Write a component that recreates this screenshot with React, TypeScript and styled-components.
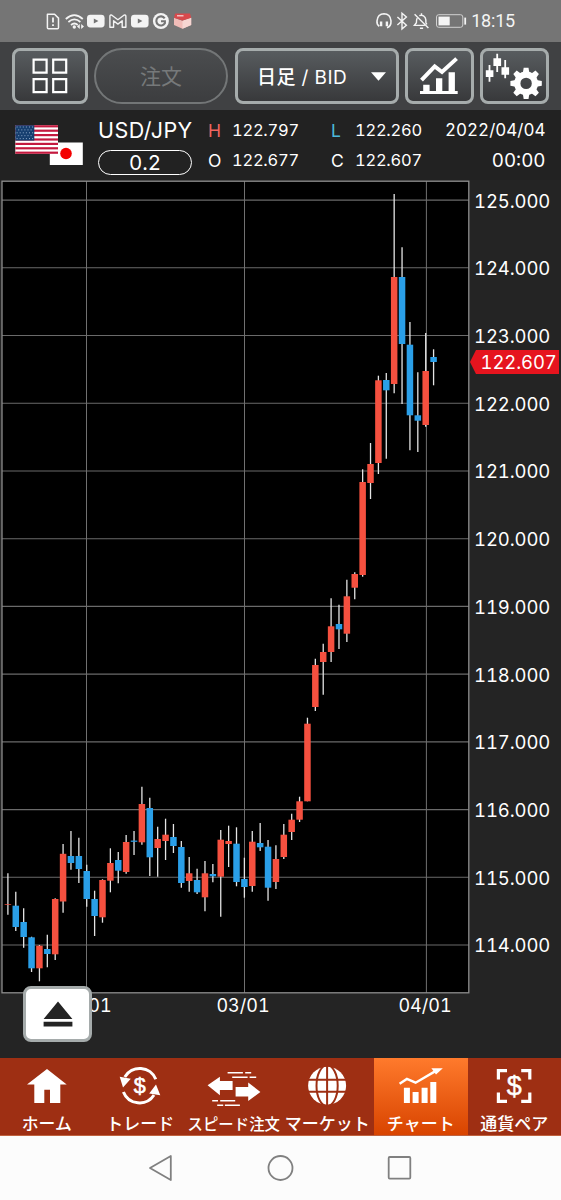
import React from 'react';
import styled, { createGlobalStyle } from 'styled-components';

const UI = `'Inter', 'Noto Sans CJK JP', sans-serif`;
const JP = `'Noto Sans CJK JP', 'Noto Sans', sans-serif`;

const GlobalStyle = createGlobalStyle`
  *, *::before, *::after { box-sizing: border-box; }
  body { margin: 0; background: #242424; }
  svg { display: block; flex: none; }
`;

const Screen = styled.div`
  width: 561px;
  height: 1200px;
  display: flex;
  flex-direction: column;
  overflow: hidden;
  background: #242424;
  color: #fff;
  font-family: ${UI};
  font-variant-numeric: tabular-nums;
`;

/* ---------- status bar ---------- */

const StatusBar = styled.header`
  height: 42px;
  flex: none;
  display: flex;
  align-items: center;
  justify-content: space-between;
  padding: 0 46px 0 42px;
  background: #757575;
`;

const StatusGroup = styled.div`
  display: flex;
  align-items: center;
`;

const Clock = styled.span`
  margin-left: 3px;
  font: 400 18px/20px Roboto, sans-serif;
  letter-spacing: -0.2px;
  color: #f4f4f4;
`;

const StatusIcon = ({ children, w = 21.7 }: { children: React.ReactNode; w?: number }) => (
  <svg width={w} height={20} viewBox={`0 0 ${w} 20`} fill="none" stroke="#f4f4f4" strokeWidth={1.5}>
    {children}
  </svg>
);

const PlayIcon = () => (
  <StatusIcon>
    <rect x="2" y="3.8" width="17.6" height="12.6" rx="3.4" fill="#f4f4f4" stroke="none" />
    <path d="M8.8 7.4v5.2l4.6-2.6z" fill="#757575" stroke="none" />
  </StatusIcon>
);

/* ---------- toolbar ---------- */

const Toolbar = styled.nav`
  height: 68px;
  flex: none;
  display: flex;
  align-items: flex-start;
  gap: 6.5px;
  padding: 6px 12px;
  background: #404143;
`;

const ToolButton = styled.button<{ $w: number; $pill?: boolean }>`
  width: ${p => p.$w}px;
  height: 56px;
  flex: none;
  display: flex;
  align-items: center;
  justify-content: center;
  padding: ${p => (p.$pill ? '2px 0 0' : '0')};
  border: ${p => (p.$pill ? '2.6px solid #737677' : '3px solid #a6acac')};
  border-radius: ${p => (p.$pill ? 28 : 8)}px;
  background: ${p =>
    p.$pill ? 'linear-gradient(#4b4d4f, #3c3d3f)' : 'linear-gradient(#585c5f, #38393b)'};
  color: ${p => (p.$pill ? '#76797a' : '#fff')};
  font: 400 21px/24px ${UI};
`;

const PeriodLabel = styled.span`
  margin-right: 24px;
  padding: 2px 0 0 10px;
  font-size: 19px;
  letter-spacing: 0.4px;
  white-space: pre;
`;

const PeriodUnit = styled.span`
  font-family: ${JP};
  font-weight: 500;
`;

/* ---------- quote header ---------- */

const Quote = styled.section`
  height: 70px;
  flex: none;
  display: grid;
  grid-template-columns: 83px 110px 24px 99px 24px 92px 98.5px;
  grid-template-rows: 30px 30px;
  align-items: center;
  padding: 5px 0 5px 15px;
  background: #222;
`;

const Flags = styled.div`
  grid-row: 1 / 3;
`;

const PairName = styled.div`
  font-size: 21.5px;
  line-height: 26px;
  letter-spacing: 0.45px;
`;

const Spread = styled.div`
  width: 94px;
  height: 25px;
  margin-top: 4px;
  border: 1.6px solid #fff;
  border-radius: 13px;
  text-align: center;
  font-size: 20.5px;
  line-height: 24px;
`;

const Mark = styled.span<{ $c?: string }>`
  font-size: 17.5px;
  color: ${p => p.$c ?? '#fff'};
`;

const Value = styled.span`
  font-size: 16.5px;
  letter-spacing: -0.25px;
`;

const Stamp = styled.span<{ $size: number }>`
  font-size: ${p => p.$size}px;
  justify-self: end;
  white-space: nowrap;
`;

/* ---------- chart ---------- */

const ChartArea = styled.main`
  position: relative;
  height: 878px;
  flex: none;
  display: grid;
  grid-template-columns: 470px 91px;
  grid-template-rows: 814px 64px;
`;

const PriceAxis = styled.div`
  display: flex;
  flex-direction: column;
  gap: 47.72px;
  padding: 10.5px 0 0 4px;
  font-size: 18.5px;
  line-height: 20px;
  letter-spacing: -0.1px;
`;

const DateAxis = styled.div`
  display: flex;
  font-size: 18px;
  line-height: 23px;
`;

const DateTick = styled.span<{ $gap: number }>`
  width: 60px;
  margin-left: ${p => p.$gap}px;
  text-align: center;
`;

const PriceTag = styled.div`
  position: absolute;
  left: 470px;
  top: 170px;
  width: 89px;
  height: 24px;
  padding-left: 10.5px;
  background: #e6141e;
  clip-path: polygon(0 50%, 6px 0, 100% 0, 100% 100%, 6px 100%);
  font-size: 18.5px;
  line-height: 25px;
  letter-spacing: -0.1px;
`;

const EjectButton = styled.button`
  position: absolute;
  left: 23px;
  top: 806px;
  width: 69px;
  height: 56px;
  display: flex;
  align-items: center;
  justify-content: center;
  padding: 0;
  border: 3px solid #a5abab;
  border-radius: 8px;
  background: #fff;
`;

// Each candle: wick top, body top, body bottom, wick bottom, rising
type Candle = [number, number, number, number, 0 | 1];
const candles: Candle[] = [
  [873.3, 904.3, 905, 914.7, 1], [891.7, 905.7, 927, 931, 0], [908.3, 922, 937, 947.7, 0],
  [936.7, 937.3, 968.3, 972, 0], [945, 945.7, 968.3, 981.3, 1], [934.7, 949, 954, 967.3, 0],
  [898.3, 899, 954.3, 960, 1], [844, 853.8, 901.5, 912.7, 1], [831, 856, 863, 869.7, 0],
  [837.7, 856, 869, 883, 0], [864.7, 871, 899, 906.7, 0], [890.7, 899, 916, 936, 0],
  [879.3, 880, 917.3, 922.7, 1], [848.3, 863, 880.7, 892.3, 1], [852, 860, 870.7, 883.3, 0],
  [835, 842, 872, 873.7, 1], [831, 840.6, 841.8, 855, 0], [786.7, 804, 842.3, 844.7, 1],
  [797.7, 808, 857.3, 876, 0], [826.7, 839, 848, 876.7, 1], [818.7, 834.7, 841, 860, 1],
  [824, 837, 846, 853, 0], [841, 847, 883, 887.7, 0], [857, 873.3, 881, 891.7, 1],
  [868.7, 880, 892.3, 894, 0], [861, 873.3, 897.3, 911.3, 1], [864, 874, 876.3, 882.3, 0],
  [830, 839.7, 876.7, 916.7, 1], [825.7, 841, 844, 867, 1], [827.3, 843.7, 882, 886.3, 0],
  [857.7, 879, 887, 897.7, 0], [831, 841.7, 886, 891.7, 1], [823, 843, 847.3, 851, 0],
  [840, 846.7, 887.7, 900.7, 0], [845.3, 859, 882, 889, 1], [824, 834.7, 857, 859, 1],
  [813.7, 819.7, 832, 840, 1], [796.7, 801.3, 819.7, 822, 1], [717.7, 723.7, 801.3, 801.3, 1],
  [658.7, 665, 707, 711, 1], [643.7, 652, 662, 694.7, 1], [598.3, 626.3, 652, 662, 1],
  [604.7, 624, 629.3, 649, 0], [579.7, 596.3, 633.7, 642, 1], [572.3, 574, 587.7, 599.3, 1],
  [469.3, 482, 575, 576.7, 1], [443, 464, 483, 499, 1], [375.7, 380.3, 463, 474, 1],
  [373, 380, 390.3, 458.7, 0], [194, 277, 384, 393.3, 1], [247.3, 277, 344, 404, 0],
  [322, 344.7, 415.3, 450.3, 0], [372.3, 415.3, 420.7, 452, 0], [333, 371, 425, 426.7, 1],
  [349.3, 357, 362, 385.3, 0],
];
const prices = Array.from({ length: 12 }, (_, i) => `${125 - i}.000`);

const Plot = () => (
  <svg width="470" height="814" viewBox="0 180 470 814">
    <rect x="2" y="181.2" width="466.8" height="811.6" fill="#000" />
    {prices.map((p, i) => (
      <path key={p} d={`M2 ${200.1 + i * 67.72}H469`} stroke="#6a6a6a" strokeWidth="1.1" />
    ))}
    {[86.5, 244.5, 426.4].map(x => (
      <path key={x} d={`M${x} 181V993`} stroke="#707070" strokeWidth="1" />
    ))}
    <rect x="2" y="181.2" width="466.8" height="811.6" fill="none" stroke="#8d8d8d" strokeWidth="1.3" />
    {candles.map(([hi, top, bot, lo, up], i) => {
      const x = 7.9 + i * 7.883;
      return (
        <g key={i}>
          <path d={`M${x} ${hi}V${lo}`} stroke="#e4e4e4" strokeWidth="1.3" />
          <rect x={x - 3.25} y={top} width="6.5" height={bot - top} fill={up ? '#f5503f' : '#2a9fe8'} />
        </g>
      );
    })}
  </svg>
);

/* ---------- bottom tabs ---------- */

const TabBar = styled.nav`
  height: 78px;
  flex: none;
  display: grid;
  grid-template-columns: repeat(6, 1fr);
  background: #9e2f13;
  border-bottom: 1px solid #c0623f;
`;

const Tab = styled.div<{ $active?: boolean }>`
  display: flex;
  flex-direction: column;
  align-items: center;
  padding-top: 7px;
  background: ${p => (p.$active ? 'linear-gradient(#ff7a2c, #d84400)' : 'none')};
`;

const TabLabel = styled.span<{ $size: number }>`
  height: 24px;
  margin-top: 4px;
  font: 500 ${p => p.$size}px/24px ${JP};
  white-space: nowrap;
`;

const TabIcon = ({ children }: { children: React.ReactNode }) => (
  <svg width="60" height="42" viewBox="0 0 60 42" fill="#fff">{children}</svg>
);

const Dollar = styled.text`
  font-family: 'Liberation Sans', sans-serif;
  text-anchor: middle;
  stroke: #fff;
`;

const HomeIcon = () => (
  <TabIcon>
    <path d="M30 4L10 19.4h7.3V38h10V24.7H33V38h10.3V19.4h6.4z" />
  </TabIcon>
);

const TradeIcon = () => (
  <TabIcon>
    <path d="M14.8 12A17.3 17.3 0 0 1 45.8 14.3M13.4 27A17.3 17.3 0 0 0 44 30" fill="none" stroke="#fff" strokeWidth="3" />
    <path d="M9.7 11.7L20.8 13.7L13 22.4zM46 19.6L50.3 30.2L39.2 28.6z" />
    <Dollar x="29.8" y="27.7" fontSize="21.5" strokeWidth=".6">$</Dollar>
  </TabIcon>
);

const SpeedIcon = () => (
  <TabIcon>
    <path d="M3.6 20.2L15.9 11.8V16H28.6V25H15.9V30.3zM56.4 27L44.2 17.6V22H31.6V31.6H44.2V36z" />
    <path
      d="M23.6 7.7h15.3M41.2 7.7h6M28.2 12.2h15.4M45.6 12.2h6.6M8.2 35.7H14M16.2 35.7h15M13.2 40.2h6M20.9 40.2h15"
      stroke="#fff" strokeWidth="1.5"
    />
  </TabIcon>
);

const GlobeIcon = () => (
  <TabIcon>
    <circle cx="30.1" cy="20.7" r="19" />
    <g fill="none" stroke="#9e2f13" strokeWidth="2">
      <path d="M30.1 1V40.4M10 14.7H50M10 26.8H50" />
      <ellipse cx="30.1" cy="20.7" rx="10.6" ry="20.4" />
    </g>
  </TabIcon>
);

const ChartTabIcon = () => (
  <TabIcon>
    <path d="M12.9 22.7h6V38h-6zM21.6 27h6v11h-6zM30.6 22.7h6V38h-6zM39.3 17h6v21h-6z" />
    <path d="M8.6 18.7L15.9 13.9L24.6 17.7L44 6.4" fill="none" stroke="#fff" strokeWidth="2.4" />
    <path d="M40.4 3.2H51.8L45 9.4z" />
  </TabIcon>
);

const PairIcon = () => (
  <TabIcon>
    <path
      d="M14.4 14.4V5.6H23M37.2 5.6h8.6v8.8M45.8 27.6v8.8h-8.6M23 36.4h-8.6v-8.8"
      fill="none" stroke="#fff" strokeWidth="3.2"
    />
    <Dollar x="30.3" y="29.5" fontSize="27" strokeWidth=".4">$</Dollar>
  </TabIcon>
);

const tabs = [
  { label: 'ホーム', size: 16.8, Icon: HomeIcon },
  { label: 'トレード', size: 17, Icon: TradeIcon },
  { label: 'スピード注文', size: 15.4, Icon: SpeedIcon },
  { label: 'マーケット', size: 17, Icon: GlobeIcon },
  { label: 'チャート', size: 17, Icon: ChartTabIcon, active: true },
  { label: '通貨ペア', size: 17, Icon: PairIcon },
];

const SystemNav = styled.footer`
  flex: 1;
  display: flex;
  justify-content: center;
  padding: 18px 2px 0 0;
  background: #fcfcfc;
`;

const teeth = Array.from({ length: 8 }, (_, i) => i * 45);

const App = () => (
  <Screen>
    <GlobalStyle />
    <StatusBar>
      <StatusGroup>
        <StatusIcon>
          <path d="M5.4 3.2h7.2l3.9 3.9v9.7q0 1-1 1H6.4q-1 0-1-1z" strokeLinejoin="round" />
          <path d="M11 6.6v5M11 13.3v1.7" strokeWidth="1.8" />
        </StatusIcon>
        <StatusIcon>
          <path d="M1.8 8q8.5-7.6 17 0M4.4 11q6-5.2 12 0M7 14q3.4-3 6.8 0" strokeWidth="1.7" />
          <circle cx="10.3" cy="16" r="1.7" fill="#f4f4f4" stroke="none" />
          <path d="M15.8 13v5l-2.8-2.5zM17.2 13v5l2.8-2.5z" fill="#f4f4f4" stroke="none" />
        </StatusIcon>
        <PlayIcon />
        <StatusIcon>
          <path d="M2.9 5.4q0-1.8 2-1.2l6 4.5 6-4.5q2-.6 2 1.2v10.9h-3.7V9.8l-4.3 3.3-4.3-3.3v6.5H2.9z" strokeWidth="1.4" strokeLinejoin="round" />
        </StatusIcon>
        <PlayIcon />
        <StatusIcon>
          <circle cx="10.9" cy="10" r="8" fill="#f4f4f4" stroke="none" />
          <path d="M14.7 7.3a4.6 4.6 0 1 0 .2 5V10.3H11" stroke="#757575" strokeWidth="2.1" />
        </StatusIcon>
        <StatusIcon>
          <path d="M2 6.8L10.5 9.8L19.2 6.8V14L10.5 17.8L2 14z" fill="#f1bcb8" stroke="none" />
          <path d="M10.5 9.8L19.2 6.8V14L10.5 17.8z" fill="#f6d6d2" stroke="none" />
          <path d="M3.2 2.6H18L19.2 6.8L10.5 9.4L2 6.8z" fill="#d9494c" stroke="none" />
          <path d="M5 4.8h6.5" stroke="#f7dede" strokeWidth="1.2" />
        </StatusIcon>
      </StatusGroup>
      <StatusGroup>
        <StatusIcon w={18}>
          <path d="M4.3 15.2Q1.6 13.5 2 9.8Q2.8 2.9 9 2.8Q15.2 2.9 16 9.8Q16.3 15.4 12 16.8" strokeWidth="1.6" />
          <path d="M6.1 10.4v4.8M11.9 10.4v4.8" strokeWidth="2.4" />
        </StatusIcon>
        <StatusIcon w={18}>
          <path d="M4.4 6l9 8.2-4.4 3.7V2.2l4.4 3.7-9 8.1" strokeWidth="1.4" />
        </StatusIcon>
        <StatusIcon w={20}>
          <path d="M6.2 7.2q-.8 1.2-.8 4.6l-2 2.6h10.4M8.3 4.7Q12 3 14.2 6.6q.8 1.6.7 5.2l1 1.5M8.9 17.2h3.2M10.5 2.2v1.6M3.6 3.3l13.8 13.8" strokeWidth="1.4" />
        </StatusIcon>
        <StatusIcon w={37}>
          <rect x="5.5" y="3.7" width="26.3" height="12.6" rx="2.3" strokeWidth="1" stroke="#d0d0d0" />
          <rect x="7.5" y="5.6" width="11.2" height="8.8" fill="#f4f4f4" stroke="none" />
          <path d="M34.2 6.6v7" strokeWidth="1.8" />
        </StatusIcon>
        <Clock>18:15</Clock>
      </StatusGroup>
    </StatusBar>

    <Toolbar>
      <ToolButton $w={75.5}>
        <svg width="36" height="36" viewBox="0 0 36 36" fill="none" stroke="#fff" strokeWidth="2.2">
          <path d="M1.6 1.6h13v13h-13zM21.2 1.6h13v13h-13zM1.6 21.2h13v13h-13zM21.2 21.2h13v13h-13z" />
        </svg>
      </ToolButton>
      <ToolButton $w={134} $pill>注文</ToolButton>
      <ToolButton $w={164}>
        <PeriodLabel><PeriodUnit>日足</PeriodUnit> / BID</PeriodLabel>
        <svg width="15" height="9" viewBox="0 0 15 9"><path d="M0 .3h15L7.5 8.7z" fill="#fff" /></svg>
      </ToolButton>
      <ToolButton $w={68.5}>
        <svg width="40" height="38" viewBox="419 58 40 38" fill="#fff">
          <path d="M420 92h37.7v3H420zM423.2 85.7h6.4v7h-6.4zM436 79.3h6.3v13.4H436zM448.6 73.3h6.3v19.4h-6.3z" />
          <path d="M421.5 81.2L434.7 67.4L442 73L456.6 59.6" fill="none" stroke="#fff" strokeWidth="4" />
        </svg>
      </ToolButton>
      <ToolButton $w={68.5}>
        <svg width="60" height="50" viewBox="484.5 51 60 50" fill="#fff">
          <path d="M490 65v16.7M497.7 53.7V72M505.7 60v18.3" stroke="#fff" strokeWidth="1.8" />
          <path d="M486.3 70.2h7.6V77h-7.6zM493.9 58.3h7.7V66h-7.7zM502 67.3h7.6v7.4H502z" />
          <circle cx="526.6" cy="83.4" r="8.8" fill="none" stroke="#fff" strokeWidth="6.2" />
          {teeth.map(a => (
            <path key={a} d="M523.3 73l.9-5.3h4.8l.9 5.3z" transform={`rotate(${a} 526.6 83.4)`} />
          ))}
        </svg>
      </ToolButton>
    </Toolbar>

    <Quote>
      <Flags>
        <svg width="69" height="42" viewBox="0 0 69 42">
          <rect x="34.8" y="18.5" width="33" height="22.5" fill="#fff" />
          <circle cx="51" cy="29.5" r="5.8" fill="#f30000" />
          <rect x=".3" y="1.2" width="42.7" height="28.6" fill="#fff" />
          {[0, 1, 2, 3, 4, 5, 6].map(i => (
            <rect key={i} x=".3" y={1.2 + i * 4.4} width="42.7" height="2.2" fill="#c4193f" />
          ))}
          <rect x=".3" y="1.2" width="19" height="15.4" fill="#173f70" />
          {[0, 1, 2, 3, 4].map(i => (
            <path key={i} d={`M1.6 ${3 + i * 2.9}H18.6`} stroke="#8fa9c8" strokeWidth="1" strokeDasharray="1 2.1" strokeDashoffset={i % 2 ? 1.5 : 0} />
          ))}
        </svg>
      </Flags>
      <PairName>USD/JPY</PairName>
      <Mark $c="#ee6560">H</Mark>
      <Value>122.797</Value>
      <Mark $c="#4cb8dc">L</Mark>
      <Value>122.260</Value>
      <Stamp $size={17}>2022/04/04</Stamp>
      <Spread>0.2</Spread>
      <Mark>O</Mark>
      <Value>122.677</Value>
      <Mark>C</Mark>
      <Value>122.607</Value>
      <Stamp $size={18.8}>00:00</Stamp>
    </Quote>

    <ChartArea>
      <Plot />
      <PriceAxis>
        {prices.map(p => <span key={p}>{p}</span>)}
      </PriceAxis>
      <DateAxis>
        <DateTick $gap={55}>02/01</DateTick>
        <DateTick $gap={98}>03/01</DateTick>
        <DateTick $gap={122}>04/01</DateTick>
      </DateAxis>
      <PriceTag>122.607</PriceTag>
      <EjectButton>
        <svg width="30" height="26" viewBox="0 0 30 26" fill="#242424">
          <path d="M15 .5L29.4 18H.6zM.6 20.7h28.8v4.7H.6z" />
        </svg>
      </EjectButton>
    </ChartArea>

    <TabBar>
      {tabs.map(({ label, size, Icon, active }) => (
        <Tab key={label} $active={active}>
          <Icon />
          <TabLabel $size={size}>{label}</TabLabel>
        </Tab>
      ))}
    </TabBar>

    <SystemNav>
      <svg width="270" height="28" viewBox="145 1154 270 28" fill="none" stroke="#808080" strokeWidth="1.8" strokeLinejoin="round">
        <path d="M170.8 1156V1180L150 1168z" />
        <circle cx="280.5" cy="1168" r="12" />
        <rect x="388.7" y="1157" width="21.6" height="21.6" rx="1" />
      </svg>
    </SystemNav>
  </Screen>
);

export default App;
